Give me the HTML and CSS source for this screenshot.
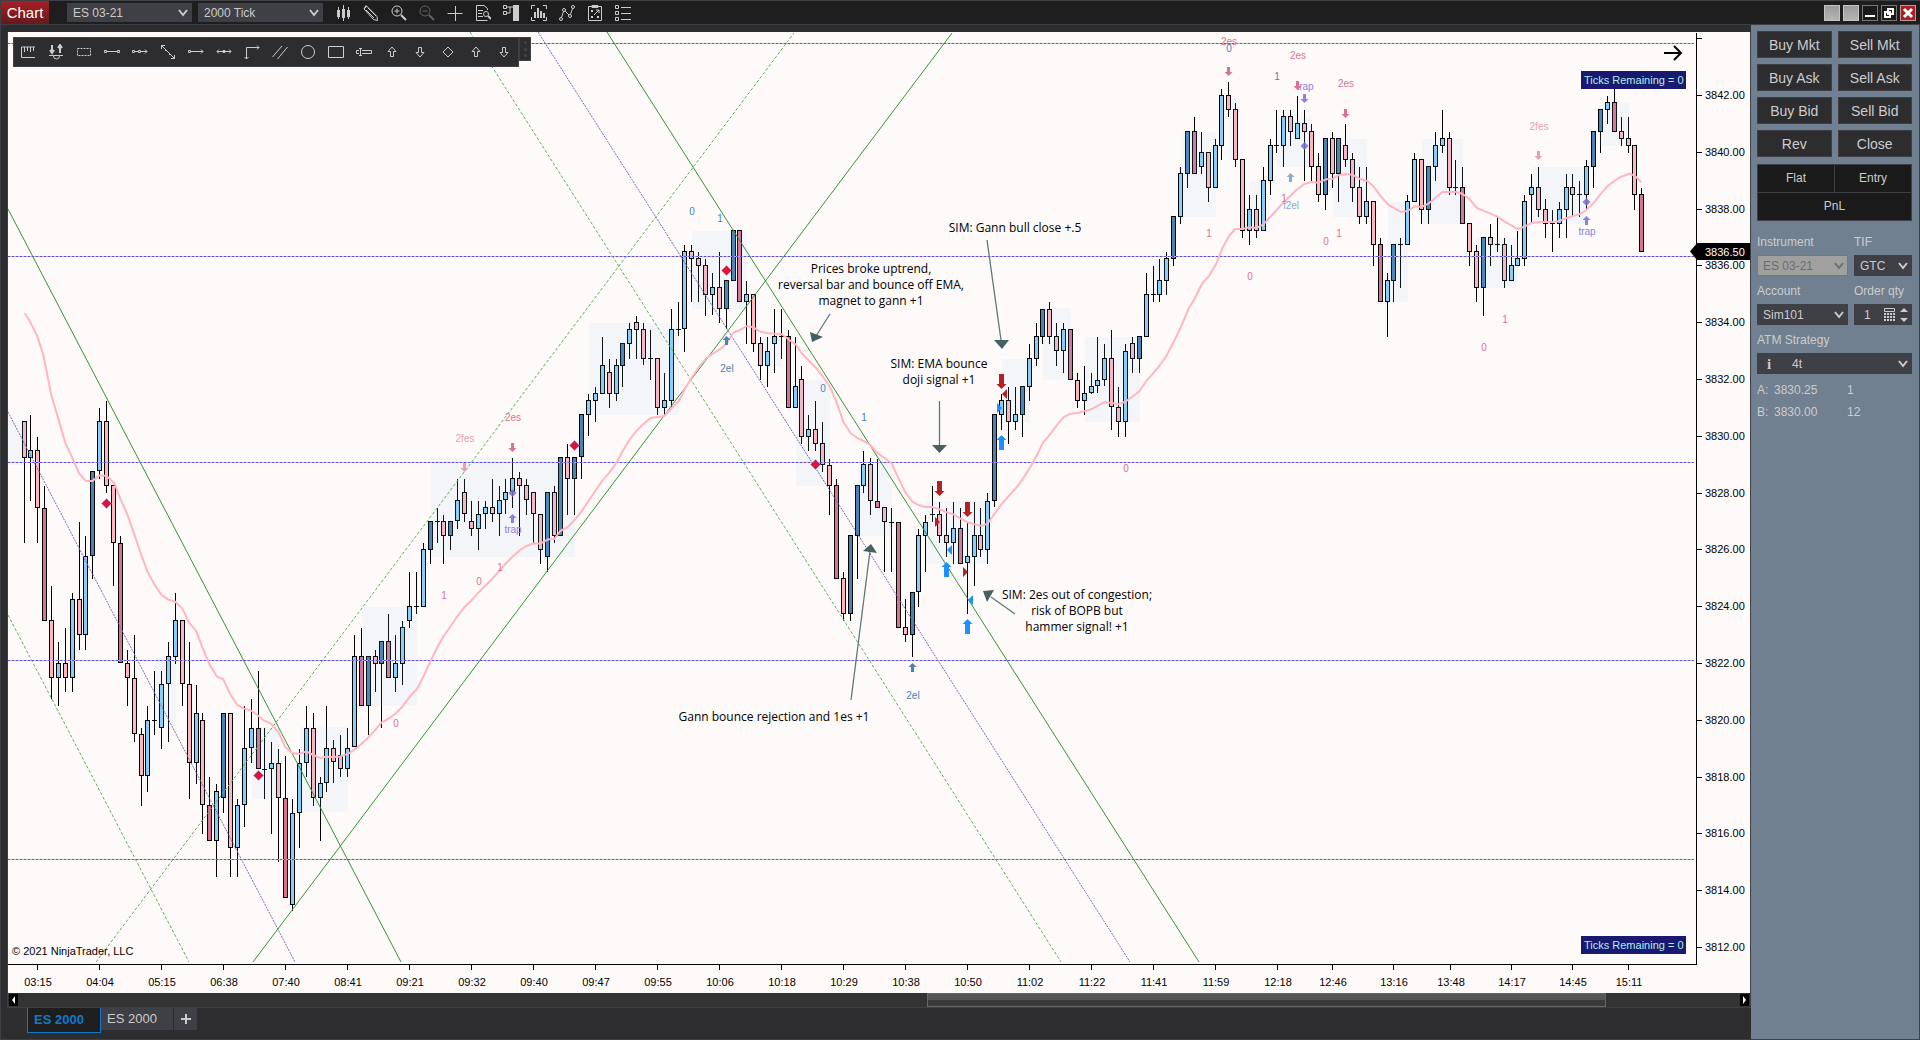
FILE: index.html
```html
<!DOCTYPE html>
<html lang="en">
<head>
<meta charset="utf-8">
<title>Chart - ES 03-21</title>
<link rel="stylesheet" href="styles.css">
</head>
<body>
<header class="titlebar">
  <button class="menu" type="button">Chart</button>
  <div class="pick pick-top"><select aria-label="Instrument"><option>ES 03-21</option></select><svg viewBox="0 0 10 8"><path d="M1 1l4 5 4-5"/></svg></div>
  <div class="pick pick-top"><select aria-label="Interval"><option>2000 Tick</option></select><svg viewBox="0 0 10 8"><path d="M1 1l4 5 4-5"/></svg></div>
  <nav class="tools" aria-label="Chart tools">
    <button type="button" aria-label="Chart style"><svg viewBox="0 0 16 18"><path class="fill" d="M2 6h3v7H2zM7 5h3v9H7zM12 6h3v7h-3z"/><path d="M3.500 3v12M8.500 1v16M13.500 3v12"/></svg></button>
    <button type="button" aria-label="Draw"><svg viewBox="0 0 16 18"><path d="M3 1.500l11 11 .5 4-4-1L1 5z"/><path d="M3 6l8 8M5 4l8 8M1 5l3-3"/></svg></button>
    <button type="button" aria-label="Zoom in"><svg viewBox="0 0 16 18"><circle cx="6" cy="7" r="5"/><path d="M3.500 7h5M6 4.500v5"/><path class="thick" d="M10 11l5 5"/></svg></button>
    <button type="button" aria-label="Zoom out" class="off"><svg viewBox="0 0 16 18"><circle cx="6" cy="7" r="5"/><path d="M3.500 7h5"/><path class="thick" d="M10 11l5 5"/></svg></button>
    <button type="button" aria-label="Crosshair"><svg viewBox="0 0 16 18"><path d="M.5 9.500h15M8.500 2v15"/></svg></button>
    <button type="button" aria-label="Data box"><svg viewBox="0 0 16 18"><path d="M12.500 6V4.500L9 1.500H1.500v15h11"/><path d="M3 6.500h5M3 9.500h4M3 12.500h5"/><circle cx="11" cy="10" r="2.500"/><path class="thick" d="M13 12l3 3"/></svg></button>
    <button type="button" aria-label="Chart trader"><svg viewBox="0 0 16 18"><path class="fill" d="M10 1h6v16h-6z"/><path d="M.5 1.500h3v3h-3zM.5 7.500h3v3h-3zM4 3h6M4 9h3V3"/></svg></button>
    <button type="button" aria-label="Data series"><svg viewBox="0 0 16 18"><path d="M4 1.500H.5V5M12 1.500h3.500V5M4 16.500H.5V13M12 16.500h3.500V13"/><path class="thick" d="M4 8v6M7 4v10M10 7v7M13 9v5"/></svg></button>
    <button type="button" aria-label="Indicators"><svg viewBox="0 0 16 18"><path d="M2 15l3-9 6 6 3-9"/><circle class="dot" cx="2" cy="15" r="1.500"/><circle class="dot" cx="5" cy="6" r="1.500"/><circle class="dot" cx="11" cy="12" r="1.500"/><circle class="dot" cx="14" cy="3" r="1.500"/></svg></button>
    <button type="button" aria-label="Strategies"><svg viewBox="0 0 16 18"><path d="M1.500 2.500h13v14h-13zM5 1.500h6v2H5z"/><path d="M4 6l2 2M6 6L4 8M4 12l2 2M6 12l-2 2M10 12l2 2M12 12l-2 2M7 11l5-5M9 6h3v3"/></svg></button>
    <button type="button" aria-label="Properties"><svg viewBox="0 0 16 18"><path d="M.5 1.500h3v3h-3zM.5 7.500h3v3h-3zM.5 13.500h3v3h-3zM6 3.500h10M6 9.500h10M6 15.500h10"/></svg></button>
  </nav>
  <div class="window-keys">
    <button class="plain" type="button" aria-label="Link instrument"></button>
    <button class="plain" type="button" aria-label="Link interval"></button>
    <button type="button" aria-label="Minimize"><svg viewBox="0 0 14 14"><path d="M2 10h10"/></svg></button>
    <button type="button" aria-label="Restore"><svg viewBox="0 0 14 14"><path d="M6 3h5v5H6zM3 6h5v5H3z"/></svg></button>
    <button class="close" type="button" aria-label="Close window"><svg viewBox="0 0 14 14"><path d="M3 3l8 8M11 3l-8 8"/></svg></button>
  </div>
</header>
<main class="work">
  <section class="board">
    <div class="stage">
      <svg id="chart" class="chart" viewBox="8 32 1742 961" role="img" aria-label="ES 03-21, 2000 tick"></svg>
      <div class="draw-bar">
        <div class="draw-keys">
          <button type="button" aria-label="Ruler"><svg viewBox="0 0 16 16"><path d="M15 3H1.500v10.500H15M4.500 3v5M7.500 3v4M10.500 3v5M13.500 3v4"/></svg></button>
          <button type="button" aria-label="Risk reward"><svg viewBox="0 0 16 16"><path d="M1 11.500h14M5.500 12a3 3 0 006 0"/><path class="thick" d="M4 1v8M2 6l2 3 2-3M12 9V1M10 4l2-3 2 3"/></svg></button>
          <button type="button" aria-label="Region"><svg viewBox="0 0 16 16"><path class="dash" d="M1.500 4.500h13v7h-13z"/></svg></button>
          <button type="button" aria-label="Line"><svg viewBox="0 0 16 16"><path d="M3 7.500h10M.5 6.500h2v2h-2zM13.500 6.500h2v2h-2z"/></svg></button>
          <button type="button" aria-label="Ray"><svg viewBox="0 0 16 16"><path d="M.5 6.500h2v2h-2zM6.500 6.500h2v2h-2zM3 7.500h3M9 7.500h6M13 5.500l2 2-2 2"/></svg></button>
          <button type="button" aria-label="Extended line"><svg viewBox="0 0 16 16"><path d="M1.500 1.500l13 13M1.500 5V1.500H5M14.500 11v3.500H11M5 6.500h2M9 10.500h2"/></svg></button>
          <button type="button" aria-label="Arrow line"><svg viewBox="0 0 16 16"><path d="M.5 6.500h2v2h-2zM3 7.500h12M13 5.500l2 2-2 2"/></svg></button>
          <button type="button" aria-label="Horizontal line"><svg viewBox="0 0 16 16"><path d="M1 7.500h14M3 5.500l-2 2 2 2M13 5.500l2 2-2 2M7 6.500h2v2H7z"/></svg></button>
          <button type="button" aria-label="Path"><svg viewBox="0 0 16 16"><path d="M2.500 15V3.500H15M13 1.500l2 2-2 2M.5 13l2 2 2-2"/></svg></button>
          <button type="button" aria-label="Channel"><svg viewBox="0 0 16 16"><path d="M.5 13L10 2M5.500 15L15.500 3"/></svg></button>
          <button type="button" aria-label="Ellipse"><svg viewBox="0 0 16 16"><circle cx="8" cy="8" r="6.500"/></svg></button>
          <button type="button" aria-label="Rectangle"><svg viewBox="0 0 16 16"><path d="M.5 2.500h15v11H.5z"/></svg></button>
          <button type="button" aria-label="Text marker"><svg viewBox="0 0 16 16"><path d="M3 6.500H.5v3H3M6 6.500h9.500v3H6M4.500 4.500v7M3 4.500h3M3 11.500h3"/></svg></button>
          <button type="button" aria-label="Arrow up"><svg viewBox="0 0 16 16"><path d="M8 3L4 7.500h2.500v5h3v-5H12z"/></svg></button>
          <button type="button" aria-label="Arrow down"><svg viewBox="0 0 16 16"><path d="M8 13L4 8.500h2.500v-5h3v5H12z"/></svg></button>
          <button type="button" aria-label="Diamond"><svg viewBox="0 0 16 16"><path d="M8 3l5 5-5 5-5-5z"/></svg></button>
          <button type="button" aria-label="Arrow up 2"><svg viewBox="0 0 16 16"><path d="M8 3L4 7.500h2.500v5h3v-5H12z"/></svg></button>
          <button type="button" aria-label="Arrow down 2"><svg viewBox="0 0 16 16"><path d="M8 13L4 8.500h2.500v-5h3v5H12z"/></svg></button>
        </div>
        <div class="grip"><i></i><i></i><i></i></div>
      </div>
    </div>
    <div class="scroll">
      <button type="button" aria-label="Scroll left"><svg viewBox="0 0 9 12"><path d="M6 2v8L3 6z"/></svg></button>
      <div class="track"><div class="thumb"></div></div>
      <button type="button" aria-label="Scroll right"><svg viewBox="0 0 9 12"><path d="M3 2v8l3-4z"/></svg></button>
    </div>
    <div class="tabs">
      <button class="tab current" type="button">ES 2000</button>
      <button class="tab" type="button">ES 2000</button>
      <button class="tab add" type="button" aria-label="Add tab"><svg viewBox="0 0 10 10"><path d="M0 5h10M5 0v10"/></svg></button>
    </div>
  </section>
  <aside class="trader">
    <div class="orders">
      <button type="button">Buy Mkt</button><button type="button">Sell Mkt</button>
      <button type="button">Buy Ask</button><button type="button">Sell Ask</button>
      <button type="button">Buy Bid</button><button type="button">Sell Bid</button>
      <button type="button">Rev</button><button type="button">Close</button>
    </div>
    <div class="position"><span>Flat</span><span>Entry</span><span class="wide">PnL</span></div>
    <form class="form">
      <label for="inst">Instrument</label><label for="tif">TIF</label>
      <div class="pick dim"><select id="inst" disabled><option>ES 03-21</option></select><svg viewBox="0 0 10 8"><path d="M1 1l4 5 4-5"/></svg></div>
      <div class="pick"><select id="tif"><option>GTC</option></select><svg viewBox="0 0 10 8"><path d="M1 1l4 5 4-5"/></svg></div>
      <label for="acct">Account</label><label for="qty">Order qty</label>
      <div class="pick"><select id="acct"><option>Sim101</option></select><svg viewBox="0 0 10 8"><path d="M1 1l4 5 4-5"/></svg></div>
      <div class="qty"><input id="qty" type="text" value="1"><svg class="calc" viewBox="0 0 11 13"><path d="M.5.500h10v3H.5z"/><path class="grid" d="M0 6h11M0 9h11M0 12h11"/></svg><svg class="spin" viewBox="0 0 8 14"><path d="M0 4l4-4 4 4zM0 10l4 4 4-4z"/></svg></div>
      <label class="wide" for="atm">ATM Strategy</label>
      <div class="pick wide atm"><b>i</b><select id="atm"><option>4t</option></select><svg viewBox="0 0 10 8"><path d="M1 1l4 5 4-5"/></svg></div>
    </form>
    <dl class="quotes"><dt>A:</dt><dd>3830.25</dd><dd>1</dd><dt>B:</dt><dd>3830.00</dd><dd>12</dd></dl>
  </aside>
</main>
<script src="chart.js"></script>
</body>
</html>
```
FILE: styles.css
```css
* { box-sizing: border-box; }
body { margin: 0; height: 100vh; display: flex; flex-direction: column; background: #2d2d30; color: #ccc; font: 12px/16px "Liberation Sans", Arial, sans-serif; border-left: 1px solid #3f3f46; border-bottom: 1px solid #3f3f46; overflow: hidden; }
button, select, input { font: inherit; color: inherit; border: 0; padding: 0; margin: 0; background: none; }
svg { display: block; fill: none; stroke: #ccc; }

.titlebar { display: flex; align-items: center; height: 25px; flex: none; padding-right: 4px; background: #1e1e1e; border-top: 1px solid #3f3f46; border-bottom: 1px solid #3f3f46; }
.menu { width: 48px; height: 23px; margin-right: 18px; color: #fff; font-size: 15px; background: linear-gradient(#a81f24, #641a1c); }
.pick { display: grid; grid-template-columns: 1fr auto; align-items: center; height: 21px; padding: 0 4px 0 6px; background: #3f3f46; }
.pick select { appearance: none; grid-area: 1 / 1 / 2 / 3; width: 100%; outline: 0; opacity: 1; }
.pick svg { grid-area: 1 / 2; width: 10px; height: 8px; stroke-width: 2; pointer-events: none; }
.pick-top { width: 125px; height: 19px; margin-right: 6px; }
.tools { display: flex; }
.tools button { width: 28px; display: grid; place-items: center; }
.tools svg { width: 16px; height: 18px; }
.tools .fill { fill: #ccc; stroke: none; }
.tools .thick { stroke-width: 2; }
.tools .dot { fill: #1e1e1e; }
.tools .off { opacity: .4; }
.window-keys { display: flex; gap: 3px; margin-left: auto; }
.window-keys button { width: 16px; height: 16px; border: 1px solid #777; background: #1b1b1b; }
.window-keys .plain { background: linear-gradient(#9c9a9b, #b5b3b4); border-color: #c5c5c5; }
.window-keys .close { background: #a81f24; border-color: #b99; }
.window-keys svg { width: 14px; height: 14px; stroke: #fff; stroke-width: 2; }
.window-keys .close svg { stroke-width: 3; }

.work { display: flex; flex: 1; min-height: 0; }
.board { flex: 1; min-width: 0; display: flex; flex-direction: column; padding: 7px 0 0 6px; }
.stage { position: relative; flex: 1; min-height: 0; background: #fffafa; border-left: 1px solid #3f3f46; border-right: 1px solid #3f3f46; }
.chart { width: 100%; height: 100%; stroke: none; }
.chart text { font-size: 11px; fill: #000; }
.chart .mark { font-size: 10px; }
.chart .note { font: 12px "Open Sans", "Noto Sans", sans-serif; }
.chart .price-now { fill: #fff; }
.chart .badge { fill: #191970; }
.chart .badge-text { fill: #afeeee; }
.chart .zone { fill: #87cefa; fill-opacity: .1; }
.draw-bar { position: absolute; left: 5px; top: 5px; display: flex; align-items: flex-start; }
.draw-keys { display: flex; align-items: center; height: 30px; background: #2d2d30; border: 1px solid #3f3f46; }
.draw-keys button { width: 28px; display: grid; place-items: center; }
.draw-keys svg { width: 16px; height: 16px; }
.draw-keys .thick { stroke-width: 2; }
.draw-keys .dash { stroke-dasharray: 2 1; }
.grip { width: 12px; height: 24px; display: flex; flex-direction: column; justify-content: space-evenly; align-items: center; background: #2d2d30; border: 1px solid #3f3f46; }
.grip i { width: 3px; height: 3px; border-radius: 2px; background: #444449; }

.scroll { display: flex; align-items: center; height: 15px; flex: none; padding: 0 1px; background: #333; border: 1px solid #3f3f46; border-width: 0 1px 1px; }
.scroll button { width: 9px; height: 12px; background: #000; }
.scroll svg { width: 9px; height: 12px; fill: #fff; stroke: none; }
.track { flex: 1; height: 14px; display: grid; grid-template-columns: 909fr 679fr 134fr; }
.thumb { grid-column: 2; background: linear-gradient(#555 50%, #3a3a3a 50%); border: 1px solid #666; }
.tabs { display: flex; align-items: flex-start; height: 31px; flex: none; padding-left: 20px; }
.tab { width: 70px; height: 22px; font-size: 13px; background: #3f3f46; text-align: left; padding-left: 6px; }
.tab.current { width: 74px; height: 25px; color: #1179cc; font-weight: bold; background: #1e1e1e; border: 1px solid #1179cc; border-top: 0; }
.tab.current + .tab { width: 72px; margin-right: 1px; }
.tab.add { width: 23px; padding: 0; display: grid; place-items: center; }
.tab svg { width: 10px; height: 10px; stroke-width: 2; }

.trader { width: 169px; flex: none; padding: 6px 7px 0 6px; background: #708090; border-right: 1px solid #3f3f46; }
.orders { display: grid; grid-template-columns: 1fr 1fr; gap: 6px; }
.orders button { height: 27px; font-size: 14px; background: #2d2d30; border: 1px solid #3f3f46; }
.position { display: grid; grid-template-columns: 1fr 1fr; gap: 1px; margin-top: 7px; background: #3f3f46; border: 1px solid #3f3f46; text-align: center; }
.position span { line-height: 27px; background: #1b1b1b; }
.form .wide, .position .wide { grid-column: 1 / 3; }
.form { display: grid; grid-template-columns: 91px 1fr; column-gap: 6px; margin-top: 6px; }
.form label { padding: 7px 0 5px; line-height: 16px; }
.dim { background: #a0a0a0; border: 1px solid #777; color: #6d6d6d; padding: 0 3px 0 5px; }
.dim svg { stroke: #6d6d6d; }
.dim select { color: #6d6d6d; }
.qty { display: flex; align-items: center; height: 21px; padding: 0 4px 0 10px; background: #3f3f46; }
.qty input { width: 10px; flex: 1; min-width: 0; outline: 0; }
.calc { width: 11px; height: 13px; margin-right: 5px; }
.calc .grid { stroke-width: 2; stroke-dasharray: 2 1; }
.spin { width: 8px; height: 14px; fill: #ccc; stroke: none; }
.atm { grid-template-columns: 29px 1fr auto; }
.atm b { grid-area: 1 / 1; padding-left: 4px; font: bold 15px/16px "Liberation Serif", serif; }
.atm select { grid-area: 1 / 2 / 2 / 4; }
.atm svg { grid-area: 1 / 3; }
.quotes { display: grid; grid-template-columns: 17px 73px 1fr; margin: 5px 0 0; line-height: 22px; }
.quotes dd { margin: 0; }
```
FILE: chart.js
```js
const NS = 'http://www.w3.org/2000/svg';
const chart = document.getElementById('chart');
function add(name, attrs, text) {
  const el = document.createElementNS(NS, name);
  for (const k in attrs) el.setAttribute(k, attrs[k]);
  if (text !== undefined) el.textContent = text;
  chart.appendChild(el);
}
const FILL = { u: '#87cefa', U: '#4682b4', d: '#ffb6c1', D: '#db7093' };

// Each block: x origin, y origin, y units per pixel (x is always thirds), and bars "x high top bottom low kind".
const blocks = [
[0, 380, 2.8, `74 116 116 217 455 d|91 98 197 217 338 u|112 160 197 357 455 d|133 297 357 674 674 D|154 577 673 833 892 d|175 734 793 833 912 u|196 694 793 833 873 d|217 596 614 833 873 u|238 398 614 713 755 d|256 437 494 713 755 u|277 256 256 494 556 U|298 78 116 256 277 u|319 59 116 296 316 d|340 295 295 455 577 d|361 437 455 793 793 D|382 755 793 833 912 d|403 714 833 992 1013 d|424 974 992 1110 1192 d|442 912 953 1110 1153 u|463 815 953 953 993 x|484 815 852 973 1032 u|505 734 773 852 1013 u|526 596 673 775 794 u|547 673 673 852 912 d|568 734 852 1071 1173 d|589 853 931 1071 1131 u|607 932 953 1191 1270 d|628 1112 1191 1290 1290 D|649 1131 1152 1290 1391 u|670 931 931 1171 1211 U|691 931 931 1309 1391 d|712 1173 1191 1309 1391 u|733 912 1031 1191 1251 u|754 893 973 1031 1072 u|775 815 973 1090 1090 D|793 974 1090 1090 1173 x|814 1014 1071 1090 1271 u|835 1034 1071 1171 1349 d|856 1053 1171 1449 1449 D|877 1173 1211 1469 1488 u|898 1034 1071 1211 1309 u|919 912 973 1071 1111 u|940 932 973 1171 1192 d|961 1111 1129 1171 1290 u|979 912 1031 1129 1153 u`],
[320, 300, 3, `40 1320 1343 1386 1450 d|61 1305 1365 1407 1430 d|82 1284 1343 1407 1430 u|103 1006 1069 1341 1341 u|124 984 1069 1217 1217 D|145 1069 1069 1217 1305 U|166 1050 1069 1091 1175 d|184 1024 1024 1091 1284 U|205 942 1024 1133 1133 D|226 1005 1090 1133 1175 u|247 963 982 1091 1154 u|268 816 919 962 983 u|289 816 919 919 941 x|310 730 748 920 920 u|331 664 664 749 791 U|352 623 664 664 728 x|370 645 664 707 791 d|391 664 664 707 749 U|412 538 601 664 686 u|433 538 577 643 665 d|454 603 664 686 707 d|475 603 643 686 749 u|496 603 622 643 686 u|517 537 622 643 665 d|538 558 601 643 707 u|556 538 577 601 643 u|577 474 535 577 623 u|598 516 535 557 707 d|619 538 556 601 644 d|640 577 577 643 728 d|661 643 643 749 791 d|682 577 577 770 815 U|703 559 577 707 728 d|721 472 472 707 707 U|742 432 472 536 644 d|763 472 472 536 644 U|784 343 343 472 536 U|805 283 301 344 409 u|826 262 280 302 365 u|847 111 196 281 281 u|868 178 217 281 323 d|889 178 196 281 302 u|907 130 130 197 261 U|928 69 88 131 177 u|949 48 67 89 177 d|970 69 88 176 196 d`],
[580, 200, 3, `211 391 475 475 540 x|232 475 475 623 644 d|253 519 601 623 644 u|274 327 388 602 623 u|295 306 388 388 409 x|313 136 154 388 455 u|334 136 154 176 305 d|355 157 175 197 305 d|376 178 196 284 347 d|397 220 262 284 346 u|418 157 262 326 368 d|439 241 241 326 388 U|460 91 91 242 242 U|478 91 91 305 305 D|499 244 283 305 431 u|520 283 283 431 455 d|541 412 430 497 539 d|562 412 454 497 560 u|583 327 409 431 518 u|604 327 409 409 476 x|625 391 409 623 623 D|646 412 559 623 623 u|664 499 538 710 731 d|685 645 688 710 752 u|706 603 688 731 752 d|727 667 730 794 815 d|748 776 794 857 944 d|769 838 856 1136 1136 D|790 1117 1135 1241 1262 d|811 1006 1006 1241 1262 U|832 856 856 1007 1136 U|850 754 793 857 878 u|871 775 793 902 944 d|892 776 902 923 923 D`],
[860, 200, 2.958, `73 909 909 951 1100 d|94 911 951 951 1100 x|115 951 951 1265 1265 D|136 1181 1264 1286 1307 d|157 1161 1161 1286 1351 U|175 974 992 1161 1203 u|196 932 951 993 1100 u|217 846 930 930 952 x|238 892 930 993 1014 d|259 912 992 1014 1055 d|280 892 971 1014 1076 u|301 912 971 1076 1076 D|322 955 1054 1075 1224 u|343 892 992 1055 1141 u|361 912 992 1034 1055 d|382 867 889 1034 1076 u|403 634 634 889 909 U|424 575 593 635 679 u|445 553 593 656 721 d|466 553 634 656 679 u|487 551 551 635 700 U|508 427 468 552 594 u|529 365 403 469 490 u|547 321 321 404 425 U|568 302 321 404 425 d|589 365 403 448 490 d|610 365 383 448 511 u|631 383 383 531 531 D|652 512 531 594 614 d|673 491 572 594 635 u|694 512 551 572 573 u|712 405 531 551 572 u|733 427 468 532 551 u|754 386 468 613 679 d|775 553 613 656 700 d|796 427 448 656 700 u|817 405 423 469 511 d|838 403 403 469 511 U|859 216 279 404 404 u|880 196 279 279 301 x`],
[1110, 20, 3, `148 718 781 824 845 u|169 697 715 782 824 u|190 589 589 716 737 U|211 442 460 590 611 u|232 334 334 461 503 U|253 291 334 461 461 D|274 337 397 440 462 u|295 397 397 503 545 d|316 358 376 503 503 u|334 208 226 377 419 u|355 187 226 269 290 d|376 249 268 419 440 d|397 418 418 632 653 d|418 526 568 632 674 u|439 526 568 632 653 d|460 442 481 632 632 u|481 358 376 482 524 u|499 270 376 376 398 x|520 270 289 377 440 u|541 270 289 335 377 d|562 229 310 356 356 u|583 270 310 335 482 d|604 313 334 440 482 d|625 400 439 524 545 d|646 355 355 524 569 U|667 337 355 461 503 d|685 355 355 461 545 U|706 313 376 419 440 d|727 400 418 503 545 d|748 442 502 590 611 d|769 442 544 590 611 u|790 544 544 674 737 d|811 655 673 845 845 D|832 760 781 845 950 u|850 673 673 782 845 U`],
[1390, 20, 3, `31 655 673 673 803 x|52 526 544 674 674 u|73 400 418 545 545 u|94 418 418 569 611 d|115 439 439 569 611 U|136 337 376 440 482 u|157 270 355 377 398 u|178 337 355 503 524 d|196 421 502 502 524 x|217 442 502 611 611 D|238 610 610 695 737 d|259 676 694 803 845 d|280 652 652 803 887 U|301 613 652 674 737 d|322 595 673 673 695 x|343 655 673 782 803 d|364 676 736 782 782 u|382 634 715 737 737 u|403 526 544 716 737 u|424 463 502 524 611 u|445 442 502 569 590 d|466 538 568 611 653 d|487 571 610 610 695 x|508 547 568 611 653 u|529 463 502 569 653 u|547 463 502 524 590 d|568 484 523 523 590 x|589 421 439 524 568 u|610 334 334 440 503 U|631 268 268 335 398 U|652 229 247 269 311 u|673 205 247 335 335 D|694 292 334 356 377 d|715 292 355 377 398 d|733 376 376 524 569 d|754 505 523 695 695 D`]
];
for (const [ox, oy, sy, bars] of blocks) {
  for (const bar of bars.split('|')) {
    const [bx, ...rest] = bar.split(' ');
    const kind = rest.pop();
    const x = ox + Math.floor(bx / 3);
    const [h, t, b, l] = rest.map(v => Math.round(oy + v / sy));
    add('rect', { x, y: h, width: 1, height: l - h, fill: '#000' });
    if (kind === 'x') add('rect', { x: x - 2, y: t, width: 5, height: 1, fill: '#000' });
    else {
      add('rect', { x: x - 2, y: t, width: 5, height: b - t, fill: '#000' });
      add('rect', { x: x - 1, y: t + 1, width: 3, height: b - t - 2, fill: FILL[kind] });
    }
  }
}

// Congestion zones: left, top, right, bottom.
[[8,422,27,465],[155,657,176,727],[252,727,279,799],[300,727,348,812],[362,607,417,706],[431,458,575,557],[589,323,679,415],[692,231,747,309],[761,337,782,366],[796,380,830,486],[858,464,892,536],[926,501,989,564],[1002,359,1030,422],[1043,308,1071,380],[1085,337,1140,422],[1154,259,1168,295],[1181,132,1216,217],[1229,96,1236,160],[1250,181,1264,231],[1277,117,1312,167],[1333,139,1367,217],[1388,202,1408,302],[1422,139,1463,224],[1477,238,1518,288],[1532,167,1587,224],[1600,103,1629,146]]
  .forEach(([a, b, c, d]) => add('rect', { class: 'zone', x: a, y: b, width: c - a, height: d - b }));

// Gann levels.
for (const y of [43, 256, 462, 660, 859]) {
  add('rect', { x: 8, y, width: 1686, height: 1, fill: '#b3aae6' });
  add('path', { d: `M8 ${y}.5H1694`, stroke: '#5d50c0', 'stroke-dasharray': '2 2' });
}
// Channels.
function line(x1, y1, x2, y2, stroke, dash) {
  const a = { x1, y1, x2, y2, stroke };
  if (dash) a['stroke-dasharray'] = dash;
  add('line', a);
}
const G = '#339433', GD = '#5cae5c', P = '#7b6ab2';
line(8, 209, 401, 962, G);
line(253, 962, 952, 33, G);
line(607, 32, 1199, 962, G);
line(8, 615, 189, 962, GD, '3 2');
line(96, 962, 794, 33, GD, '3 2');
line(470, 32, 1061, 962, GD, '3 2');
line(8, 412, 295, 962, P, '2 1');
line(538, 32, 1130, 962, P, '2 1');

// Moving average, in the same block units as the bars.
const ema = [
[0, 380, 2.8, '74 -188 91 -162 112 -123 130 -70 145 0 154 42 175 108 196 176 217 218 238 262 258 283 277 283 298 267 319 268 343 288 361 332 382 376 403 432 424 490 442 535 463 572 484 601 505 615 526 621 547 640 568 680 589 703 607 748 628 795 651 831 670 838 691 880 712 910 733 920 754 926 775 940 793 954 814 963 835 985 856 1028 877 1044 898 1047 919 1040 940 1050 961 1058 979 1055 1000 1056 1021 1054 1045 1046 1070 1030'],
[320, 300, 3, '137 1320 166 1290 184 1268 205 1257 226 1241 247 1220 268 1192 291 1167 310 1130 331 1085 352 1042 370 1010 391 980 412 949 433 922 454 902 475 878 496 857 517 836 538 813 556 792 577 771 600 750 619 738 641 730 661 731 684 718 703 717 721 693 742 682 763 661 784 635 805 604 826 573 850 538 868 518 889 489 907 455 928 420 949 393 970 373'],
[580, 200, 3, '211 654 232 651 253 648 276 623 297 603 313 570 334 535 355 503 376 478 397 462 418 449 439 431 460 398 478 391 501 378 520 382 541 395 562 399 583 401 606 403 625 418 648 434 664 458 685 480 706 501 727 527 748 557 769 605 790 665 811 698 832 714 853 724 871 735'],
[860, 200, 2.958, '52 748 94 778 115 822 136 865 157 892 175 902 196 908 217 908 238 915 259 923 280 930 301 942 322 953 343 959 364 964 382 958 403 929 424 900 445 877 466 855 487 827 508 795 529 758 550 716 568 696 589 668 610 643 631 632 652 630 673 625 694 619 712 609 733 598 754 600 775 604 796 597 817 582 838 566 859 536 880 512'],
[1110, 20, 3, '148 1038 169 1008 190 968 211 925 235 868 253 838 277 790 297 768 318 733 337 685 357 648 376 627 397 627 418 622 439 624 460 614 481 590 502 568 520 548 541 527 562 508 583 492 604 486 625 488 648 478 669 476 685 466 706 462 727 464 748 476 772 483 790 498 811 527 834 554 870 574'],
[1390, 20, 3, '33 576 52 573 75 559 94 561 115 551 136 534 157 516 178 516 199 516 217 521 238 537 261 564 280 572 301 581 322 590 343 604 364 616 382 627 403 620 427 608 450 606 490 606 508 603 529 595 547 589 568 583 589 570 610 550 631 523 652 499 673 483 694 470 717 461 733 466 754 487']
];
const pts = [];
for (const [ox, oy, sy, list] of ema) {
  const n = list.split(' ');
  for (let i = 0; i < n.length; i += 2) pts.push(`${(ox + n[i] / 3).toFixed(1)},${(oy + n[i + 1] / sy).toFixed(1)}`);
}
add('polyline', { points: pts.join(' '), fill: 'none', stroke: '#ffb6c1', 'stroke-width': 2, 'stroke-linejoin': 'round' });

// Signals.
const PINK = '#db7093', PALE = '#e6a0b5', BLUE = '#4682b4', SOFT = '#84adcf', PURPLE = '#8d80dc';
[[513,421,'2es',PINK],[465,442,'2fes',PALE],[396,727,'0',PINK],[444,599,'1',PINK],[479,585,'0',PINK],[500,571,'1',PINK],[513,533,'trap',PURPLE],
[692,215,'0',BLUE],[720,222,'1',BLUE],[727,372,'2el',BLUE],[823,392,'0',BLUE],[864,421,'1',BLUE],[913,699,'2el',BLUE],[1126,472,'0',PINK],
[1229,45,'2es',PINK],[1229,52,'0',BLUE],[1298,59,'2es',PINK],[1277,80,'1',BLUE],[1305,90,'trap',PURPLE],[1346,87,'2es',PINK],[1284,202,'1',PINK],[1291,209,'f2el',SOFT],[1326,245,'0',PINK],[1339,237,'1',PINK],[1209,237,'1',PINK],[1250,280,'0',PINK],
[1539,130,'2fes',PALE],[1587,235,'trap',PURPLE],[1505,323,'1',PINK],[1484,351,'0',PINK]]
  .forEach(([x, y, s, fill]) => add('text', { class: 'mark', x, y, 'text-anchor': 'middle', style: `fill:${fill}` }, s));

// Arrows point at (x, tip); dir 1 is up, -1 is down.
function arrow(x, tip, dir, fill, w, len) {
  const n = w > 4 ? 2.5 : 1.5, c = x + .5, k = tip + dir * w;
  add('path', { fill, d: `M${c} ${tip}L${c + w} ${k}H${c + n}V${tip + dir * len}H${c - n}V${k}H${c - w}Z` });
}
[[464,472,-1,PALE],[512,452,-1,PINK],[512,514,1,PURPLE],[726,336,1,BLUE],[912,663,1,BLUE],[1228,76,-1,PINK],[1297,90,-1,PINK],[1304,103,-1,PURPLE],[1345,118,-1,PINK],[1290,173,1,SOFT],[1538,160,-1,PALE],[1586,216,1,PURPLE]]
  .forEach(a => arrow(...a, 4, 9));
[[939,496],[967,517],[1001,389]].forEach(([x, y]) => arrow(x, y, -1, '#b22222', 5, 15));
[[1001,435],[946,562],[967,619]].forEach(([x, y]) => arrow(x, y, 1, '#1e90ff', 5, 15));
[[1002,394,1,'#b22222'],[1002,408,-1,'#1e90ff'],[940,522,-1,'#b22222'],[947,550,1,'#1e90ff'],[968,572,-1,'#b22222'],[968,600,1,'#1e90ff']]
  .forEach(([x, y, s, fill]) => add('path', { fill, d: `M${x} ${y}l${s * 5} -5v10z` }));
[[106,503],[258,775],[574,445],[726,270],[815,464]].forEach(([x, y]) => add('path', { fill: '#dc143c', stroke: '#a9c', 'stroke-width': .5, d: `M${x + .5} ${y - 4.5}l5 5-5 5-5-5z` }));
[[512,493],[1304,146],[1586,202]].forEach(([x, y]) => add('path', { fill: '#7b6ccf', 'fill-opacity': .85, d: `M${x + .5} ${y - 4}l4 4-4 4-4-4z` }));

// Trade notes.
[[774,721,'Gann bounce rejection and 1es +1'],[871,273,'Prices broke uptrend,'],[871,289,'reversal bar and bounce off EMA,'],[871,305,'magnet to gann +1'],[1015,232,'SIM: Gann bull close +.5'],[939,368,'SIM: EMA bounce'],[939,384,'doji signal +1'],[1077,599,'SIM: 2es out of congestion;'],[1077,615,'risk of BOPB but'],[1077,631,'hammer signal! +1']]
  .forEach(([x, y, s]) => add('text', { class: 'note', x, y, 'text-anchor': 'middle' }, s));
[['M830 314L816 336','810,332 823,337 812,342'],['M851 700L870 551','863,551 877,553 871,544'],['M987 240L1001 340','994,340 1009,340 1002,349'],['M939.500 401V446','932,445 947,445 939.5,453'],['M1015 614L991 597','994,590 987,602 983,591']]
  .forEach(([d, points]) => { add('path', { d, stroke: '#5f7878', 'stroke-width': 1.3 }); add('polygon', { points, fill: '#456060' }); });

// Axes.
add('path', { d: 'M1696.500 33V964.500M8 964.500H1697', stroke: '#000' });
for (let p = 3844; p >= 3812; p -= 2) {
  const y = Math.round(95 + (3842 - p) * 28.4);
  add('rect', { x: 1697, y, width: 5, height: 1, fill: '#000' });
  if (p < 3844) add('text', { x: 1705, y: y + 4 }, p.toFixed(2));
}
const times = '03:15 04:04 05:15 06:38 07:40 08:41 09:21 09:32 09:40 09:47 09:55 10:06 10:18 10:29 10:38 10:50 11:02 11:22 11:41 11:59 12:18 12:46 13:16 13:48 14:17 14:45 15:11'.split(' ');
const timeX = [37,99,161,223,285,347,409,471,533,595,657,719,781,843,905,967,1029,1091,1153,1215,1277,1332,1393,1450,1511,1572,1628];
times.forEach((t, i) => {
  add('rect', { x: timeX[i], y: 965, width: 1, height: 5, fill: '#000' });
  add('text', { x: timeX[i] + 1, y: 986, 'text-anchor': 'middle' }, t);
});
add('path', { d: 'M1690 251.500l7-8.500h53v17h-53z', fill: '#000' });
add('text', { class: 'price-now', x: 1705, y: 256 }, '3836.50');
add('path', { d: 'M1664 53h17M1674 46l7 7-7 7', fill: 'none', stroke: '#000', 'stroke-width': 2 });
for (const y of [71, 936]) {
  add('rect', { class: 'badge', x: 1581, y, width: 105, height: 18 });
  add('text', { class: 'badge-text', x: 1584, y: y + 13 }, 'Ticks Remaining = 0');
}
add('text', { x: 12, y: 955 }, '© 2021 NinjaTrader, LLC');
```
